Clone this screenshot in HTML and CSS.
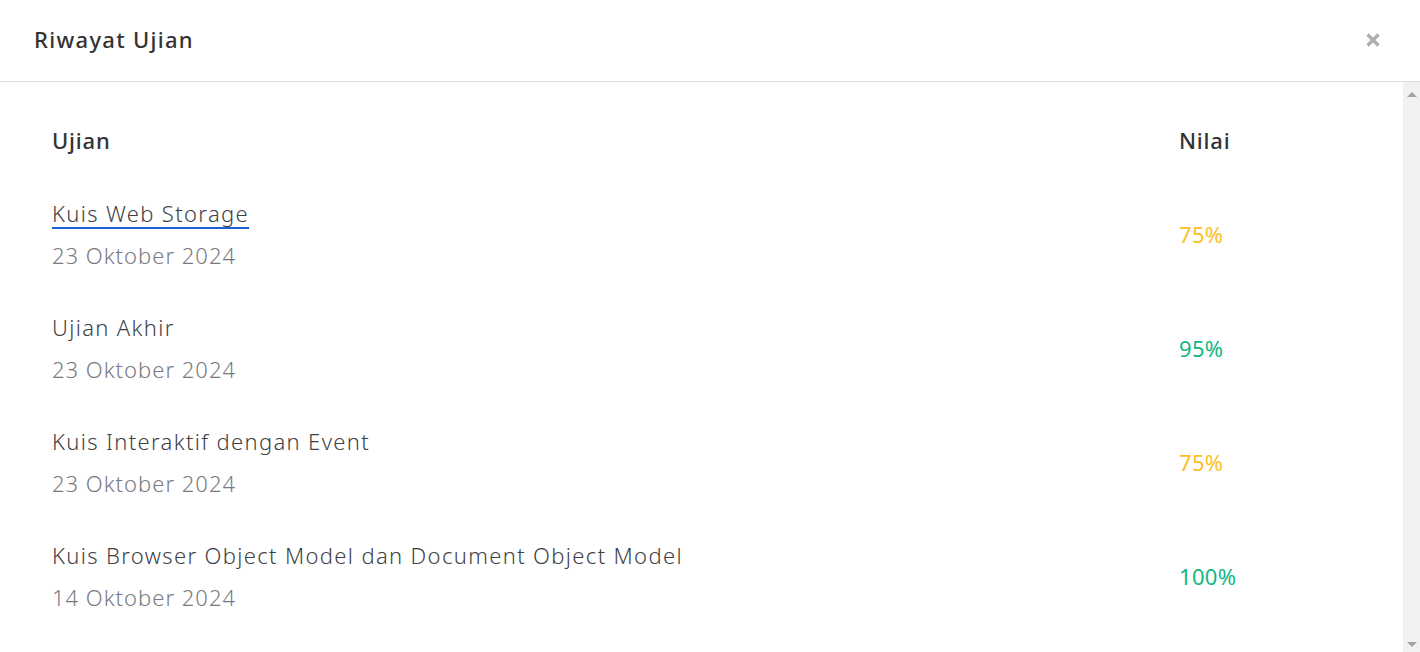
FILE: index.html
```html
<!DOCTYPE html>
<html lang="id">
<head>
<meta charset="utf-8">
<title>Riwayat Ujian</title>
<link rel="stylesheet" href="styles.css">
</head>
<body>
<div class="modal">
  <header class="modal-header">
    <h1 class="modal-title">Riwayat Ujian</h1>
    <button class="close-btn" aria-label="Tutup">
      <svg width="16" height="16" viewBox="0 0 16 16"><path d="M2.5 2.5L13.5 13.5M13.5 2.5L2.5 13.5" stroke="#b0b0b0" stroke-width="3.4"/></svg>
    </button>
  </header>
  <div class="modal-body">
    <div class="content">
      <div class="table">
        <div class="row head">
          <div class="cell">Ujian</div>
          <div class="cell">Nilai</div>
        </div>
        <div class="row">
          <div class="cell">
            <a class="exam-name link" href="#">Kuis Web Storage</a>
            <div class="exam-date">23 Oktober 2024</div>
          </div>
          <div class="cell score warn">75%</div>
        </div>
        <div class="row">
          <div class="cell">
            <div class="exam-name">Ujian Akhir</div>
            <div class="exam-date">23 Oktober 2024</div>
          </div>
          <div class="cell score good">95%</div>
        </div>
        <div class="row">
          <div class="cell">
            <div class="exam-name">Kuis Interaktif dengan Event</div>
            <div class="exam-date">23 Oktober 2024</div>
          </div>
          <div class="cell score warn">75%</div>
        </div>
        <div class="row">
          <div class="cell">
            <div class="exam-name">Kuis Browser Object Model dan Document Object Model</div>
            <div class="exam-date">14 Oktober 2024</div>
          </div>
          <div class="cell score good">100%</div>
        </div>
      </div>
    </div>
    <div class="scrollbar">
      <span class="arrow up"></span>
      <span class="arrow down"></span>
    </div>
  </div>
</div>
</body>
</html>
```

FILE: styles.css
```css
* { box-sizing: border-box; }
html, body { margin: 0; height: 100%; }
body {
  font-family: "Noto Sans", "Open Sans", sans-serif;
  background: #fff;
  color: #3f3f46;
  overflow: hidden;
}
.modal {
  display: flex;
  flex-direction: column;
  height: 652px;
}
.modal-header {
  height: 82px;
  flex: none;
  display: flex;
  align-items: center;
  justify-content: space-between;
  padding: 0 39px 3px 34px;
  border-bottom: 1px solid #dedede;
}
.modal-title {
  margin: 0;
  font-size: 22px;
  font-weight: 500;
  color: #333;
  letter-spacing: 1.3px;
}
.close-btn {
  border: 0;
  background: none;
  padding: 0;
  width: 16px;
  height: 16px;
  display: flex;
  margin-top: 1px;
}
.modal-body {
  flex: 1;
  display: flex;
  min-height: 0;
}
.content {
  flex: 1;
  padding: 21px 0 0 52px;
  overflow: hidden;
}
.table {
  display: flex;
  flex-direction: column;
}
.row {
  display: grid;
  grid-template-columns: 1127px 1fr;
  align-items: center;
  height: 114px;
  padding: 15px 0;
}
.row.head {
  height: 74px;
  padding: 0;
  font-size: 22px;
  font-weight: 500;
  color: #333;
  letter-spacing: 0.8px;
}
.exam-name {
  display: inline-block;
  font-size: 22px;
  font-weight: 300;
  line-height: 42px;
  letter-spacing: 1.35px;
  color: #3f3f46;
  text-decoration: none;
}
.exam-name.link {
  text-decoration: underline;
  text-decoration-color: #1d5fd6;
  text-underline-offset: 5px;
  text-decoration-thickness: 2px;
}
.exam-date {
  font-size: 22px;
  font-weight: 300;
  line-height: 42px;
  letter-spacing: 1px;
  color: #7a7a82;
}
.score {
  font-size: 22px;
  font-weight: 400;
  letter-spacing: 0.3px;
}
.score.warn { color: #fbbf24; }
.score.good { color: #10b981; }
.scrollbar {
  width: 17px;
  flex: none;
  background: #f1f1f1;
  display: flex;
  flex-direction: column;
  justify-content: space-between;
  align-items: center;
  padding: 10px 0 5px;
}
.arrow {
  width: 0;
  height: 0;
  border-left: 5px solid transparent;
  border-right: 5px solid transparent;
}
.arrow.up { border-bottom: 5px solid #a3a3a3; }
.arrow.down { border-top: 5px solid #a3a3a3; }
```
